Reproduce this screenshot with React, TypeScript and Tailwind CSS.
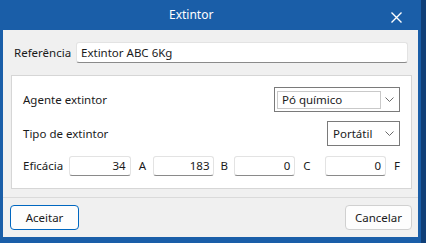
import React from "react";

const font = { fontFamily: '"Noto Sans", "Segoe UI", sans-serif' };

function Chevron() {
  return (
    <svg width="9" height="5" viewBox="0 0 9 5" className="shrink-0">
      <path d="M0.5 0.5 L4.5 4.5 L8.5 0.5" fill="none" stroke="#6a6a6a" strokeWidth="1" />
    </svg>
  );
}

function NumBox({ value, w }: { value: string; w: string }) {
  return (
    <div
      className={`${w} h-[20px] bg-white border border-[#e3e3e3] border-b-[#8a8a8a] rounded-[3px] flex items-center justify-end pr-[4px] text-[11.5px] text-[#1a1a1a]`}
    >
      {value}
    </div>
  );
}

export default function App() {
  return (
    <div className="w-[426px] h-[243px] bg-[#0f3f78] overflow-hidden" style={font}>
      <div className="w-[421px] h-[243px] bg-[#1a5ea8] flex flex-col px-[3px] pb-[6px]">
        {/* Title bar */}
        <div className="h-[30px] relative shrink-0">
          <div className="absolute left-[166px] top-[6px] text-[12px] text-white">Extintor</div>
          <svg
            className="absolute left-[388px] top-[12px]"
            width="11"
            height="11"
            viewBox="0 0 11 11"
          >
            <path d="M0.5 0.5 L10.5 10.5 M10.5 0.5 L0.5 10.5" stroke="white" strokeWidth="1.4" />
          </svg>
        </div>
        {/* Client */}
        <div className="flex-1 bg-[#f0f0f0] flex flex-col">
          <div className="flex items-center mt-[12px] pl-[11px] pr-[10px] h-[21px]">
            <div className="w-[62px] text-[11.5px] text-[#1a1a1a]">Referência</div>
            <div className="flex-1 h-[21px] bg-white border border-[#e3e3e3] border-b-[#8a8a8a] rounded-[3px] flex items-center pl-[4px] text-[11.5px] text-[#1a1a1a]">
              Extintor ABC 6Kg
            </div>
          </div>

          <div className="mt-[12px] ml-[8px] w-[401px] h-[114px] bg-white border border-[#d6d6d6] px-[11px] pt-[11px] flex flex-col text-[11.5px] text-[#1a1a1a]">
            <div className="flex items-center justify-between h-[25px]">
              <div>Agente extintor</div>
              <div className="w-[126px] h-[25px] border border-[#7a7a7a] flex items-center pl-[2px] pr-[4px]">
                <div className="w-[104px] h-[18px] border border-[#c9c9c9] flex items-center pl-[4px]">
                  Pó químico
                </div>
                <div className="flex-1 flex justify-end pr-[1px]">
                  <Chevron />
                </div>
              </div>
            </div>
            <div className="flex items-center justify-between h-[25px] mt-[9px]">
              <div>Tipo de extintor</div>
              <div className="w-[73px] h-[25px] border border-[#7a7a7a] flex items-center pl-[5px] pr-[5px] justify-between">
                <span>Portátil</span>
                <Chevron />
              </div>
            </div>
            <div className="flex items-center h-[20px] mt-[10px]">
              <div className="w-[46px]">Eficácia</div>
              <NumBox value="34" w="w-[62px]" />
              <div className="w-[22px] pl-[8px]">A</div>
              <NumBox value="183" w="w-[62px]" />
              <div className="w-[20px] pl-[6px]">B</div>
              <NumBox value="0" w="w-[61px]" />
              <div className="w-[30px] pl-[8px]">C</div>
              <NumBox value="0" w="w-[61px]" />
              <div className="pl-[8px]">F</div>
            </div>
          </div>

          <div className="mt-[8px] h-[1px] bg-[#dadada]" />
          <div className="flex-1 flex items-center justify-between pl-[7px] pr-[6px]">
            <div className="w-[69px] h-[25px] rounded-[4px] border border-[#0067c0] bg-[#fdfdfd] flex items-center justify-center text-[11.5px] text-[#1a1a1a]">
              Aceitar
            </div>
            <div className="w-[67px] h-[25px] rounded-[4px] border border-[#d0d0d0] bg-[#fdfdfd] flex items-center justify-center text-[11.5px] text-[#1a1a1a]">
              Cancelar
            </div>
          </div>
        </div>
      </div>
    </div>
  );
}
